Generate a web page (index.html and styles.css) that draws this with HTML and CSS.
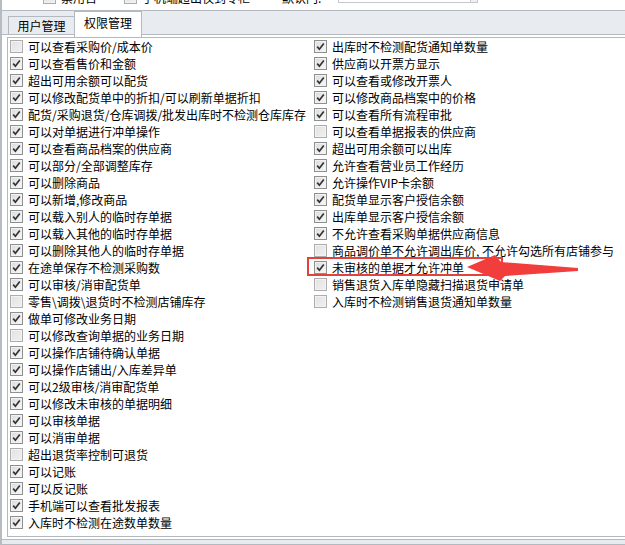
FILE: index.html
```html
<!DOCTYPE html>
<html lang="zh-CN">
<head>
<meta charset="utf-8">
<title>权限管理</title>
<link rel="stylesheet" href="styles.css">
</head>
<body>
<div class="window">
  <div class="topbar">
    <label class="item top-a"><span class="cb"></span><span>禁用否</span></label>
    <label class="item top-b"><span class="cb"></span><span>手机端超出仅到专柜</span></label>
    <span class="top-c">默认门:</span>
    <span class="top-input"><span class="top-btn"></span></span>
  </div>
  <div class="tabstrip">
    <div class="tab">用户管理</div>
    <div class="tab active">权限管理</div>
  </div>
  <div class="panel-wrap">
    <div class="panel">
      <div class="col">
        <label class="item"><span class="cb"></span><span>可以查看采购价/成本价</span></label>
        <label class="item"><span class="cb on"><svg viewBox="0 0 11 11"><path d="M2.2 5.6 L4.4 8.2 L8.8 2.4"/></svg></span><span>可以查看售价和金额</span></label>
        <label class="item"><span class="cb on"><svg viewBox="0 0 11 11"><path d="M2.2 5.6 L4.4 8.2 L8.8 2.4"/></svg></span><span>超出可用余额可以配货</span></label>
        <label class="item"><span class="cb on"><svg viewBox="0 0 11 11"><path d="M2.2 5.6 L4.4 8.2 L8.8 2.4"/></svg></span><span>可以修改配货单中的折扣/可以刷新单据折扣</span></label>
        <label class="item"><span class="cb on"><svg viewBox="0 0 11 11"><path d="M2.2 5.6 L4.4 8.2 L8.8 2.4"/></svg></span><span>配货/采购退货/仓库调拨/批发出库时不检测仓库库存</span></label>
        <label class="item"><span class="cb on"><svg viewBox="0 0 11 11"><path d="M2.2 5.6 L4.4 8.2 L8.8 2.4"/></svg></span><span>可以对单据进行冲单操作</span></label>
        <label class="item"><span class="cb on"><svg viewBox="0 0 11 11"><path d="M2.2 5.6 L4.4 8.2 L8.8 2.4"/></svg></span><span>可以查看商品档案的供应商</span></label>
        <label class="item"><span class="cb on"><svg viewBox="0 0 11 11"><path d="M2.2 5.6 L4.4 8.2 L8.8 2.4"/></svg></span><span>可以部分/全部调整库存</span></label>
        <label class="item"><span class="cb on"><svg viewBox="0 0 11 11"><path d="M2.2 5.6 L4.4 8.2 L8.8 2.4"/></svg></span><span>可以删除商品</span></label>
        <label class="item"><span class="cb on"><svg viewBox="0 0 11 11"><path d="M2.2 5.6 L4.4 8.2 L8.8 2.4"/></svg></span><span>可以新增,修改商品</span></label>
        <label class="item"><span class="cb on"><svg viewBox="0 0 11 11"><path d="M2.2 5.6 L4.4 8.2 L8.8 2.4"/></svg></span><span>可以载入别人的临时存单据</span></label>
        <label class="item"><span class="cb on"><svg viewBox="0 0 11 11"><path d="M2.2 5.6 L4.4 8.2 L8.8 2.4"/></svg></span><span>可以载入其他的临时存单据</span></label>
        <label class="item"><span class="cb on"><svg viewBox="0 0 11 11"><path d="M2.2 5.6 L4.4 8.2 L8.8 2.4"/></svg></span><span>可以删除其他人的临时存单据</span></label>
        <label class="item"><span class="cb on"><svg viewBox="0 0 11 11"><path d="M2.2 5.6 L4.4 8.2 L8.8 2.4"/></svg></span><span>在途单保存不检测采购数</span></label>
        <label class="item"><span class="cb on"><svg viewBox="0 0 11 11"><path d="M2.2 5.6 L4.4 8.2 L8.8 2.4"/></svg></span><span>可以审核/消审配货单</span></label>
        <label class="item"><span class="cb"></span><span>零售\调拨\退货时不检测店铺库存</span></label>
        <label class="item"><span class="cb on"><svg viewBox="0 0 11 11"><path d="M2.2 5.6 L4.4 8.2 L8.8 2.4"/></svg></span><span>做单可修改业务日期</span></label>
        <label class="item"><span class="cb"></span><span>可以修改查询单据的业务日期</span></label>
        <label class="item"><span class="cb on"><svg viewBox="0 0 11 11"><path d="M2.2 5.6 L4.4 8.2 L8.8 2.4"/></svg></span><span>可以操作店铺待确认单据</span></label>
        <label class="item"><span class="cb on"><svg viewBox="0 0 11 11"><path d="M2.2 5.6 L4.4 8.2 L8.8 2.4"/></svg></span><span>可以操作店铺出/入库差异单</span></label>
        <label class="item"><span class="cb on"><svg viewBox="0 0 11 11"><path d="M2.2 5.6 L4.4 8.2 L8.8 2.4"/></svg></span><span>可以2级审核/消审配货单</span></label>
        <label class="item"><span class="cb on"><svg viewBox="0 0 11 11"><path d="M2.2 5.6 L4.4 8.2 L8.8 2.4"/></svg></span><span>可以修改未审核的单据明细</span></label>
        <label class="item"><span class="cb on"><svg viewBox="0 0 11 11"><path d="M2.2 5.6 L4.4 8.2 L8.8 2.4"/></svg></span><span>可以审核单据</span></label>
        <label class="item"><span class="cb on"><svg viewBox="0 0 11 11"><path d="M2.2 5.6 L4.4 8.2 L8.8 2.4"/></svg></span><span>可以消审单据</span></label>
        <label class="item"><span class="cb"></span><span>超出退货率控制可退货</span></label>
        <label class="item"><span class="cb on"><svg viewBox="0 0 11 11"><path d="M2.2 5.6 L4.4 8.2 L8.8 2.4"/></svg></span><span>可以记账</span></label>
        <label class="item"><span class="cb on"><svg viewBox="0 0 11 11"><path d="M2.2 5.6 L4.4 8.2 L8.8 2.4"/></svg></span><span>可以反记账</span></label>
        <label class="item"><span class="cb on"><svg viewBox="0 0 11 11"><path d="M2.2 5.6 L4.4 8.2 L8.8 2.4"/></svg></span><span>手机端可以查看批发报表</span></label>
        <label class="item"><span class="cb on"><svg viewBox="0 0 11 11"><path d="M2.2 5.6 L4.4 8.2 L8.8 2.4"/></svg></span><span>入库时不检测在途数单数量</span></label>
      </div>
      <div class="col">
        <label class="item"><span class="cb on"><svg viewBox="0 0 11 11"><path d="M2.2 5.6 L4.4 8.2 L8.8 2.4"/></svg></span><span>出库时不检测配货通知单数量</span></label>
        <label class="item"><span class="cb on"><svg viewBox="0 0 11 11"><path d="M2.2 5.6 L4.4 8.2 L8.8 2.4"/></svg></span><span>供应商以开票方显示</span></label>
        <label class="item"><span class="cb on"><svg viewBox="0 0 11 11"><path d="M2.2 5.6 L4.4 8.2 L8.8 2.4"/></svg></span><span>可以查看或修改开票人</span></label>
        <label class="item"><span class="cb on"><svg viewBox="0 0 11 11"><path d="M2.2 5.6 L4.4 8.2 L8.8 2.4"/></svg></span><span>可以修改商品档案中的价格</span></label>
        <label class="item"><span class="cb on"><svg viewBox="0 0 11 11"><path d="M2.2 5.6 L4.4 8.2 L8.8 2.4"/></svg></span><span>可以查看所有流程审批</span></label>
        <label class="item"><span class="cb"></span><span>可以查看单据报表的供应商</span></label>
        <label class="item"><span class="cb on"><svg viewBox="0 0 11 11"><path d="M2.2 5.6 L4.4 8.2 L8.8 2.4"/></svg></span><span>超出可用余额可以出库</span></label>
        <label class="item"><span class="cb on"><svg viewBox="0 0 11 11"><path d="M2.2 5.6 L4.4 8.2 L8.8 2.4"/></svg></span><span>允许查看营业员工作经历</span></label>
        <label class="item"><span class="cb on"><svg viewBox="0 0 11 11"><path d="M2.2 5.6 L4.4 8.2 L8.8 2.4"/></svg></span><span>允许操作VIP卡余额</span></label>
        <label class="item"><span class="cb on"><svg viewBox="0 0 11 11"><path d="M2.2 5.6 L4.4 8.2 L8.8 2.4"/></svg></span><span>配货单显示客户授信余额</span></label>
        <label class="item"><span class="cb on"><svg viewBox="0 0 11 11"><path d="M2.2 5.6 L4.4 8.2 L8.8 2.4"/></svg></span><span>出库单显示客户授信余额</span></label>
        <label class="item"><span class="cb on"><svg viewBox="0 0 11 11"><path d="M2.2 5.6 L4.4 8.2 L8.8 2.4"/></svg></span><span>不允许查看采购单据供应商信息</span></label>
        <label class="item"><span class="cb"></span><span>商品调价单不允许调出库价, 不允许勾选所有店铺参与</span></label>
        <label class="item"><span class="cb on"><svg viewBox="0 0 11 11"><path d="M2.2 5.6 L4.4 8.2 L8.8 2.4"/></svg></span><span>未审核的单据才允许冲单</span></label>
        <label class="item"><span class="cb"></span><span>销售退货入库单隐藏扫描退货申请单</span></label>
        <label class="item"><span class="cb"></span><span>入库时不检测销售退货通知单数量</span></label>
      </div>
    </div>
  </div>
  <div class="footer"></div>
</div>
<svg class="annot" width="625" height="545" viewBox="0 0 625 545">
  <rect x="308" y="258" width="194" height="17" fill="none" stroke="#e5413b" stroke-width="2"/>
  <polygon points="467,267 495,255 501,262 578,268 578,271 505,276 500,281" fill="#f23d3d"/>
</svg>
</body>
</html>
```

FILE: styles.css
```css
html, body {
  margin: 0;
  padding: 0;
  background: #ffffff;
}
body {
  position: relative;
  width: 625px;
  height: 545px;
  overflow: hidden;
  font-family: "Noto Sans CJK SC", "Microsoft YaHei", sans-serif;
  font-size: 12px;
  color: #000;
}
.window {
  border-left: 2px solid #b7bcc3;
  height: 545px;
  box-sizing: border-box;
  display: flex;
  flex-direction: column;
}
.topbar {
  height: 10px;
  box-sizing: border-box;
  padding-bottom: 4px;
  display: flex;
  align-items: flex-end;
  overflow: hidden;
  flex: none;
}
.item {
  display: flex;
  align-items: center;
  height: 17px;
  line-height: 17px;
  white-space: nowrap;
  gap: 5px;
}
.top-a { margin-left: 41px; }
.top-b { margin-left: 27px; }
.top-c { margin-left: 32px; line-height: 17px; white-space: nowrap; }
.top-input {
  margin-left: 17px;
  margin-bottom: 3px;
  width: 140px;
  height: 20px;
  box-sizing: border-box;
  border: 1px solid #c5c8cd;
  display: flex;
  justify-content: flex-end;
}
.top-btn {
  width: 6px;
  border-left: 1px solid #c5c8cd;
  background: #eef0f3;
}
.cb {
  width: 13px;
  height: 13px;
  box-sizing: border-box;
  border: 1px solid #8e8f8f;
  background: linear-gradient(135deg, #d9d9d9 0%, #eeeeee 60%, #f8f8f8 100%);
  box-shadow: inset 0 0 0 1px #f2f2f2;
  flex: none;
  display: flex;
  align-items: center;
  justify-content: center;
}
.cb:not(.on) {
  border-color: #adadad;
  background: linear-gradient(135deg, #e2e2e2 0%, #f0f0f0 100%);
}
.cb svg {
  width: 11px;
  height: 11px;
  display: block;
}
.cb svg path {
  fill: none;
  stroke: #333333;
  stroke-width: 1.7;
}
.tabstrip {
  flex: none;
  height: 25px;
  box-sizing: border-box;
  border-top: 1px solid #b4b9c0;
  border-bottom: 1px solid #b4b9c0;
  background: #e8ebef;
  display: flex;
  align-items: flex-end;
  padding-left: 6px;
}
.tab {
  height: 19px;
  margin-bottom: -1px;
  box-sizing: border-box;
  width: 66px;
  border: 1px solid #b4b9c0;
  border-right: none;
  background: #e8ebef;
  text-align: center;
  line-height: 17px;
  white-space: nowrap;
}
.tab.active {
  height: 26px;
  width: 68px;
  margin-bottom: -3px;
  background: #ffffff;
  border-right: 1px solid #b4b9c0;
  border-bottom: none;
  line-height: 22px;
}
.panel-wrap {
  flex: none;
  padding: 2px 0 0 5px;
}
.panel {
  height: 500px;
  box-sizing: border-box;
  border: 1px solid #b4b9c0;
  border-right: none;
  background: #fff;
  display: grid;
  grid-template-columns: 304px 1fr;
  align-items: start;
}
.col {
  display: flex;
  flex-direction: column;
  padding-left: 2px;
}
.footer {
  flex: none;
  margin-top: 2px;
  height: 6px;
  box-sizing: border-box;
  border-top: 1px solid #b4b9c0;
  border-bottom: 1px solid #b4b9c0;
  background: #e8ebef;
}
.annot {
  position: absolute;
  left: 0;
  top: 0;
  pointer-events: none;
}
```
